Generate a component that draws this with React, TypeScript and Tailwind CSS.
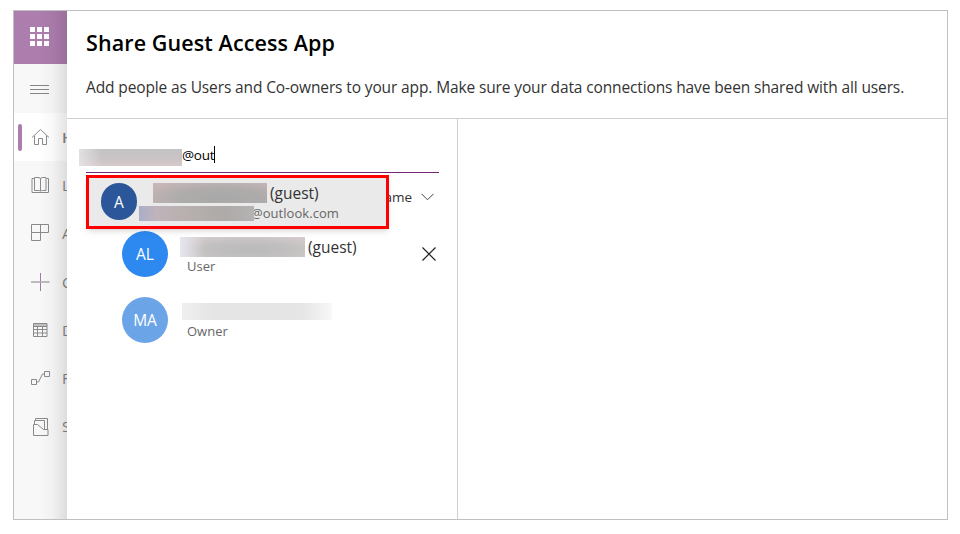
import type { ReactNode } from "react";

function Svg({ children }: { children: ReactNode }) {
  return (
    <svg viewBox="0 0 20 20" width="20" height="20" fill="none" stroke="currentColor" strokeWidth="1" className="shrink-0">
      {children}
    </svg>
  );
}

const items: { letter: string; icon: ReactNode }[] = [
  {
    letter: "L",
    icon: (
      <Svg>
        <path d="M4 3.5H2V17.5H18.5V3.5H16.5" />
        <path d="M4.5 2.5H8Q10.5 2.5 10.5 4V16Q9.5 15.5 8 15.5H4.5ZM10.5 4Q10.5 2.5 12.5 2.5H16V15.5H12.5Q11 15.5 10.5 16" />
      </Svg>
    ),
  },
  {
    letter: "A",
    icon: (
      <Svg>
        <path d="M1.5 .5H18.5V8.5H1.5ZM1.5 8.5V16.5H10.5V.5" />
      </Svg>
    ),
  },
  {
    letter: "C",
    icon: (
      <Svg>
        <path d="M10.5 1V19" stroke="#a27aa4" />
        <path d="M1 10H19.5" stroke="#acacac" strokeWidth="1.6" />
      </Svg>
    ),
  },
  {
    letter: "D",
    icon: (
      <Svg>
        <path d="M3 5H17" stroke="#c0c0c0" strokeWidth="2" />
        <path d="M3.5 3.5H17V16.5H3.5ZM3 6.5H17M3 9.5H17M3 13H17M7.5 6V16.5M12.5 6V16.5" />
      </Svg>
    ),
  },
  {
    letter: "F",
    icon: (
      <Svg>
        <path d="M1.5 11.5H6.5V16.5H1.5ZM14.5 3.5H19.5V8.5H14.5ZM6.5 14H8.5L12.5 6H14.5" />
      </Svg>
    ),
  },
  {
    letter: "S",
    icon: (
      <Svg>
        <path d="M3.5 7.5H7.5L13.5 12.5H18V18.5H3.5ZM4.5 7.5V3.5H14.5V12.5M5.5 3.5V1.5H17.5V12.5" />
      </Svg>
    ),
  },
];

function NavRow({ letter, icon, active = false }: { letter: string; icon: ReactNode; active?: boolean }) {
  return (
    <div className={`flex h-[48.25px] shrink-0 items-center overflow-hidden ${active ? "bg-white" : ""}`}>
      <div className={`ml-1 h-[27px] w-1 shrink-0 rounded-full ${active ? "bg-[#ac7dad]" : ""}`} />
      <div className="ml-2 shrink-0 text-[#8a8a8a]">{icon}</div>
      <span className={`ml-3 text-[15px] ${active ? "font-semibold" : ""}`}>{letter}</span>
    </div>
  );
}

export default function App() {
  return (
    <div className="h-[534px] w-[960px] bg-white pt-[10px] pl-[13px] font-['Open_Sans','Noto_Sans',sans-serif] text-[#333]">
      <div className="flex h-[510px] w-[935px] border border-[#c0c0c0]">
        <aside className="relative flex w-[53px] shrink-0 flex-col overflow-hidden bg-[#f8f8f8] text-[#858585]">
          <div className="flex h-[53px] shrink-0 items-center bg-[#ac7dad] pb-[2px] pl-4">
            <div className="grid grid-cols-3 gap-[2px]">
              {Array.from({ length: 9 }, (_, i) => (
                <div key={i} className="size-[5px] bg-white" />
              ))}
            </div>
          </div>
          <div className="flex h-[49px] shrink-0 flex-col justify-center gap-[3px] pt-px pl-4">
            <div className="h-px w-[19px] bg-[#858585]" />
            <div className="h-px w-[19px] bg-[#858585]" />
            <div className="h-px w-[19px] bg-[#858585]" />
          </div>
          <NavRow
            active
            letter="H"
            icon={
              <Svg>
                <path d="M2 10.5L10.5 2.5L19 10.5M4.5 8.5V17.5H8.5V11.5H12.5V17.5H16.5V8.5" />
              </Svg>
            }
          />
          {items.map((item) => (
            <NavRow key={item.letter} {...item} />
          ))}
          <div className="absolute inset-y-0 right-0 w-[28px] bg-linear-to-r from-black/0 via-black/3 to-black/11" />
        </aside>

        <main className="flex min-w-0 flex-1 flex-col bg-white">
          <header className="h-[108px] shrink-0 border-b border-[#d0d0d0] pl-[19px]">
            <h1 className="pt-4 text-[21.5px] leading-8 font-semibold tracking-[0.1px] whitespace-nowrap text-black">
              Share Guest Access App
            </h1>
            <p className="mt-4 text-[15.5px] leading-6 tracking-[-0.127px] whitespace-nowrap">
              Add people as Users and Co-owners to your app. Make sure your data connections have been shared with all users.
            </p>
          </header>

          <div className="flex flex-1">
            <section className="w-[391px] shrink-0 border-r border-[#d0d0d0]">
              <div className="relative ml-[19px] h-[54px] w-[353px] border-b border-[#742774]">
                <div className="-ml-[7px] flex items-start pt-[27px]">
                  <div className="mt-[3px] h-[17px] w-[103px] bg-[linear-gradient(90deg,#e8e8e8d0,#e8e8e800_22%),linear-gradient(180deg,#c3c3c3,#c9c4c5_50%,#d6c9cb)]" />
                  <span className="text-[13.5px] leading-[18px] tracking-[-0.25px] text-black">@out</span>
                  <div className="h-[17px] w-px bg-black" />
                </div>

                <div className="absolute top-[56px] left-0 z-10 h-[54px] w-[303px] border-3 border-[#ff0000] bg-[#eaeaea] shadow-md">
                  <div className="flex pt-[5px] pl-3">
                    <div className="flex h-[37px] w-9 shrink-0 items-center justify-center rounded-full bg-[#2b579a] pt-[2px] text-[15.5px] text-white">
                      A
                    </div>
                    <div className="ml-[2px]">
                      <div className="ml-[14px] flex">
                        <div className="h-5 w-[114px] bg-[radial-gradient(ellipse_at_60%_75%,#a8a8a8_0%,#aeacab_45%,#cdb8ba_100%)]" />
                        <span className="ml-[3px] text-[15.5px] leading-5">(guest)</span>
                      </div>
                      <div className="mt-[3px] flex">
                        <div className="z-10 h-[15px] w-[115px] bg-[linear-gradient(90deg,#aaaec8,#c0b3bb_15%,#b8b0af_40%,#adaaa8_75%,#b5b3b3)]" />
                        <span className="-ml-[3px] text-[13px] leading-[15px] tracking-[0.05px] text-[#666]">@outlook.com</span>
                      </div>
                    </div>
                  </div>
                </div>
              </div>

              <div className="mr-[23px] flex h-[50px] items-center justify-end pb-px text-[13.5px]">
                <span>Name</span>
                <svg width="13" height="8" viewBox="0 0 13 8" fill="none" stroke="#444" className="mb-px ml-[9px]">
                  <path d="M.5 .8L6.5 6.8L12.5 .8" />
                </svg>
              </div>

              <div className="mt-2 flex h-[46px] pr-[21px] pl-[55px]">
                <div className="flex size-[46px] shrink-0 items-center justify-center rounded-full bg-[#2d89ef] pt-[2px] text-[15.5px] text-white">
                  AL
                </div>
                <div className="ml-3 pt-[6px]">
                  <div className="flex">
                    <div className="h-5 w-[125px] bg-[linear-gradient(90deg,#e6e6ee,#e6e6ee00_20%),radial-gradient(ellipse_at_55%_65%,#bababa_0%,#c2c0c0_45%,#dccfd1_100%)]" />
                    <span className="ml-[3px] text-[15.5px] leading-5">(guest)</span>
                  </div>
                  <div className="ml-[7px] text-[13px] leading-[18px] text-[#666]">User</div>
                </div>
                <svg width="14" height="14" viewBox="0 0 14 14" fill="none" stroke="#222" strokeWidth="1.2" className="mt-4 ml-auto">
                  <path d="M.5 .5L13.5 13.5M13.5 .5L.5 13.5" />
                </svg>
              </div>

              <div className="mt-5 flex h-[46px] pl-[55px]">
                <div className="flex size-[46px] shrink-0 items-center justify-center rounded-full bg-[#6ca4e8] pt-[2px] text-[15.5px] text-white">
                  MA
                </div>
                <div className="ml-[14px] pt-[6px]">
                  <div className="h-[17px] w-[150px] bg-[linear-gradient(90deg,#efeff0,#e5e5e5_20%,#e5e5e5_80%,#f8f8f8)]" />
                  <div className="mt-[2px] ml-[5px] text-[13px] leading-[18px] text-[#666]">Owner</div>
                </div>
              </div>
            </section>
            <section className="flex-1" />
          </div>
        </main>
      </div>
    </div>
  );
}
